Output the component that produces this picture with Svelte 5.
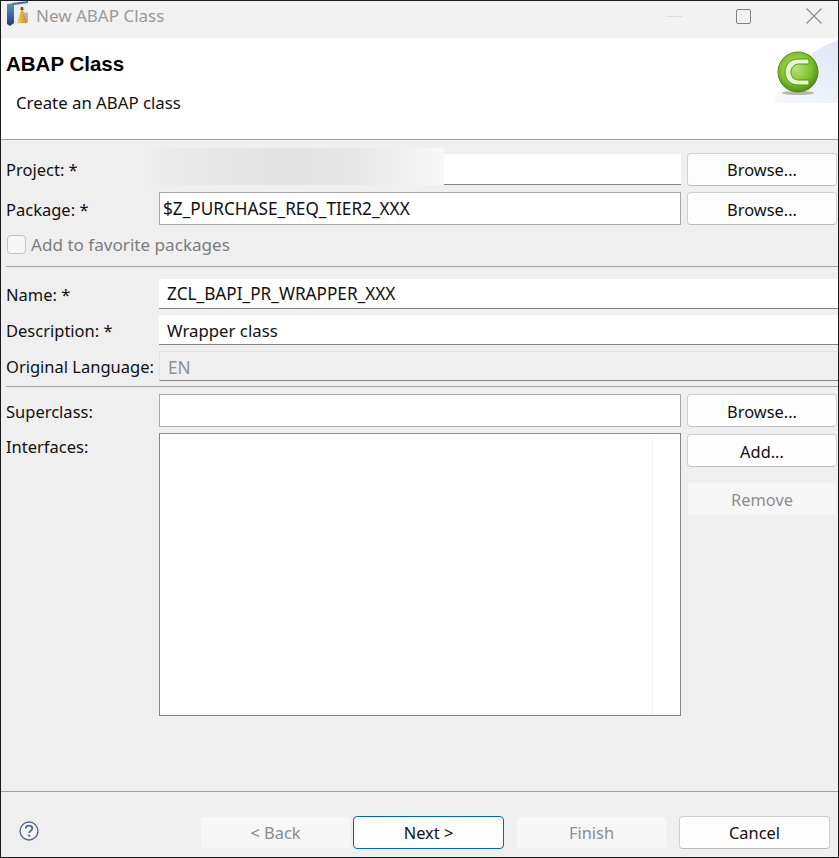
<script>
  const buttonsBottom = ['< Back', 'Next >', 'Finish', 'Cancel'];
</script>

<div class="dialog">
  <div class="titlebar">
    <svg class="app-icon" width="22" height="26" viewBox="0 0 22 26">
      <defs>
        <linearGradient id="cone" x1="0" x2="1" y1="0" y2="0">
          <stop offset="0" stop-color="#f4cf6a" />
          <stop offset="1" stop-color="#c98a16" />
        </linearGradient>
        <linearGradient id="book" x1="0" x2="0" y1="0" y2="1">
          <stop offset="0" stop-color="#5f8fc4" />
          <stop offset="1" stop-color="#1e3f70" />
        </linearGradient>
      </defs>
      <path d="M6 3 L21 1 V21 L6 24z" fill="#ececec" />
      <path d="M0 3 L7 2 V22 L3 25 L0 23z" fill="url(#book)" />
      <path d="M5 2 L21 0 V2 L7 4z" fill="#3f73ad" />
      <path d="M15 11 L21 12 V21 L15 22z" fill="#b4b4b4" />
      <path d="M15 6 L20 22 H10z" fill="url(#cone)" />
      <path d="M14 6h2l.7 3h-3.4z" fill="#6f5a22" />
    </svg>
    <span class="title">New ABAP Class</span>
    <div class="win-controls">
      <span class="minimize"></span>
      <span class="maximize"></span>
      <svg width="16" height="16" viewBox="0 0 16 16"><path d="M.5.5l15 15M15.5.5l-15 15" stroke="#8a8a8a" stroke-width="1.1" fill="none" /></svg>
    </div>
  </div>

  <div class="banner">
    <div>
      <h1>ABAP Class</h1>
      <p>Create an ABAP class</p>
    </div>
    <div class="banner-art">
      <svg width="64" height="66" viewBox="0 0 64 66">
        <defs>
          <radialGradient id="ball" cx="0.45" cy="0.4" r="0.65">
            <stop offset="0" stop-color="#b5e27a" />
            <stop offset="0.6" stop-color="#7fc22c" />
            <stop offset="1" stop-color="#3f8410" />
          </radialGradient>
          <linearGradient id="swoosh" x1="0" x2="1" y1="1" y2="0">
            <stop offset="0" stop-color="#f7f9fd" />
            <stop offset="1" stop-color="#dfe7f6" />
          </linearGradient>
        </defs>
        <path d="M0 65 C8 38 32 14 64 2 V65z" fill="url(#swoosh)" />
        <ellipse cx="24" cy="55" rx="16" ry="2" fill="#b4b8a6" />
        <circle cx="24" cy="34" r="20" fill="url(#ball)" stroke="#5e7f2c" stroke-width="1" />
        <path d="M35 21 H24 C16 21 11 27 11 34 C11 42 17 47 24 47 H35 V42 H25 C20 42 17 39 17 34 C17 30 20 26 25 26 H35z" fill="#e8f6d4" stroke="#4f9a18" stroke-width="1" />
      </svg>
    </div>
  </div>

  <div class="body">
    <div class="blur"></div>

    <div class="row row-project">
      <span class="label">Project: *</span>
      <div class="input underlined"></div>
      <button class="btn">Browse...</button>
    </div>
    <div class="row row-package nudge">
      <span class="label">Package: *</span>
      <div class="input boxed">$Z_PURCHASE_REQ_TIER2_XXX</div>
      <button class="btn">Browse...</button>
    </div>
    <label class="check">
      <span class="checkbox"></span>
      <span>Add to favorite packages</span>
    </label>
    <hr class="sep first" />

    <div class="row wide name">
      <span class="label">Name: *</span>
      <div class="input underlined">ZCL_BAPI_PR_WRAPPER_XXX</div>
    </div>
    <div class="row wide desc nudge">
      <span class="label">Description: *</span>
      <div class="input underlined">Wrapper class</div>
    </div>
    <div class="row wide lang nudge">
      <span class="label">Original Language:</span>
      <div class="input underlined readonly">EN</div>
    </div>
    <hr class="sep second" />

    <div class="row row-super nudge2">
      <span class="label">Superclass:</span>
      <div class="input boxed"></div>
      <button class="btn">Browse...</button>
    </div>
    <div class="row row-interfaces nudge">
      <span class="label top">Interfaces:</span>
      <div class="listbox"><div class="scroll-line"></div></div>
      <div class="side-btns">
        <button class="btn">Add...</button>
        <button class="btn disabled">Remove</button>
      </div>
    </div>
  </div>

  <div class="footer">
    <svg class="help" width="20" height="20" viewBox="0 0 20 20">
      <circle cx="10" cy="10" r="9" fill="#f6f6f8" stroke="#5d6b8a" stroke-width="1.4" />
      <path d="M6.8 7.6c0-2 1.5-3 3.3-3s3.2 1 3.2 2.7c0 2.4-3.2 2.4-3.2 4.6" fill="none" stroke="#5d6b8a" stroke-width="1.9" />
      <circle cx="10.1" cy="14.6" r="1.2" fill="#5d6b8a" />
    </svg>
    <div class="nav-btns">
      {#each buttonsBottom as text}
        <button
          class="btn nav"
          class:disabled={text === '< Back' || text === 'Finish'}
          class:primary={text === 'Next >'}
        >{text}</button>
      {/each}
    </div>
  </div>
</div>

<style>
  :global(body) {
    margin: 0;
    background: #efefef;
  }
  .dialog {
    box-sizing: border-box;
    width: 839px;
    height: 858px;
    display: flex;
    flex-direction: column;
    border: 1px solid #1a1a1a;
    background: #efefef;
    font-family: "Noto Sans", "Open Sans", sans-serif;
    font-size: 17px;
    color: #111;
    overflow: hidden;
  }
  .titlebar {
    height: 37px;
    background: #f2f2f2;
    display: flex;
    align-items: center;
    padding-left: 6px;
    flex-shrink: 0;
  }
  .app-icon {
    margin-right: 7px;
    margin-top: -11px;
  }
  .title {
    color: #9a9a9a;
    font-size: 17px;
    margin-top: -8px;
  }
  .win-controls {
    margin-left: auto;
    display: flex;
    align-items: center;
    margin-top: -7px;
    margin-right: 16px;
  }
  .minimize {
    width: 15px;
    height: 1px;
    background: #dcdcdc;
    margin-right: 54px;
  }
  .maximize {
    box-sizing: border-box;
    width: 15px;
    height: 15px;
    border: 1.5px solid #808080;
    border-radius: 2px;
    margin-right: 55px;
  }
  .banner {
    height: 101px;
    background: #fff;
    border-bottom: 1px solid #a0a0a0;
    display: flex;
    justify-content: space-between;
    flex-shrink: 0;
  }
  .banner h1 {
    margin: 14px 0 0 5px;
    font-family: "Liberation Sans", sans-serif;
    font-size: 20.5px;
    line-height: 24px;
    font-weight: 700;
    color: #000;
  }
  .banner p {
    margin: 15px 0 0 15px;
    font-size: 16.8px;
    line-height: 24px;
  }
  .banner-art {
    align-self: flex-start;
    height: 66px;
  }
  .body {
    position: relative;
    flex: 1;
    padding: 13px 0 0 5px;
    display: flex;
    flex-direction: column;
  }
  .blur {
    position: absolute;
    left: 150px;
    top: 8px;
    width: 293px;
    height: 37px;
    background: linear-gradient(90deg, #ececec 0%, #e3e3e3 45%, #e7e7e7 70%, #f8f8f8 100%);
    z-index: 1;
  }
  .row {
    display: flex;
    align-items: center;
  }
  .label {
    width: 153px;
    flex-shrink: 0;
    white-space: nowrap;
    font-size: 16.5px;
  }
  .input {
    box-sizing: border-box;
    width: 522px;
    height: 31px;
    background: #fff;
    padding-left: 8px;
    font-size: 17.2px;
    line-height: 30px;
    white-space: nowrap;
    flex-shrink: 0;
  }
  .boxed {
    height: 33px;
    border: 1px solid #a8a8a8;
    padding-left: 3px;
  }
  .underlined {
    border-bottom: 1px solid #858585;
  }
  .wide .input {
    flex: 1;
    width: auto;
    height: 30px;
    line-height: 29px;
    margin-right: -2px;
  }
  .desc .input {
    font-size: 16.8px;
  }
  .readonly {
    background: #efefef;
    color: #8f8f8f;
    border-top: 1px solid #e4e4e4;
    border-left: 1px solid #e4e4e4;
  }
  .btn {
    box-sizing: border-box;
    width: 150px;
    height: 33px;
    margin-left: 6px;
    padding: 0;
    background: #fdfdfd;
    border: 1px solid #d0d0d0;
    border-bottom-color: #bdbdbd;
    border-radius: 4px;
    font: inherit;
    font-size: 16.4px;
    color: #111;
    flex-shrink: 0;
  }
  .btn.disabled {
    background: #f7f7f7;
    border-color: #f0f0f0;
    color: #8c8c8c;
  }
  .btn.primary {
    border: 1.5px solid #0067c0;
  }
  .nudge .label,
  .nudge .input,
  .nudge .btn {
    padding-top: 1px;
  }
  .nudge2 .label,
  .nudge2 .btn {
    padding-top: 2px;
  }
  .row-project { height: 32px; }
  .row-package { height: 33px; margin-top: 7px; }
  .check {
    display: flex;
    align-items: center;
    gap: 5px;
    margin-top: 9px;
    height: 20px;
    color: #7d7d7d;
    padding-left: 1px;
    font-size: 17.1px;
  }
  .checkbox {
    box-sizing: border-box;
    width: 19px;
    height: 19px;
    border: 1px solid #c4c4c4;
    border-radius: 4px;
    background: #f6f6f6;
  }
  .sep {
    border: 0;
    height: 1px;
    background: #a0a0a0;
    margin: 0 -1px 0 0;
  }
  .sep.first { margin-top: 12px; }
  .name { margin-top: 12px; }
  .desc { margin-top: 6px; }
  .lang { margin-top: 6px; }
  .sep.second { margin-top: 5px; }
  .row-super { margin-top: 7px; height: 33px; }
  .row-interfaces {
    margin-top: 6px;
    align-items: flex-start;
  }
  .label.top { line-height: 26px; }
  .listbox {
    box-sizing: border-box;
    width: 522px;
    height: 283px;
    background: #fff;
    border: 1px solid #85858f;
    display: flex;
    justify-content: flex-end;
    padding: 3px 27px 0 0;
    flex-shrink: 0;
  }
  .scroll-line {
    width: 1px;
    background: #eef2fa;
  }
  .side-btns {
    display: flex;
    flex-direction: column;
    gap: 15px;
    padding-top: 1px;
  }
  .footer {
    flex-shrink: 0;
    height: 65px;
    border-top: 1px solid #a0a0a0;
    position: relative;
    display: flex;
    align-items: flex-start;
  }
  .help {
    margin: 29px 0 0 18px;
  }
  .nav-btns {
    position: absolute;
    left: 199px;
    top: 24px;
    display: flex;
  }
  .btn.nav {
    width: 151px;
    margin-left: 0;
  }
  .btn.nav:nth-child(2) { margin-left: 2px; }
  .btn.nav:nth-child(3) { margin-left: 12px; }
  .btn.nav:nth-child(4) { margin-left: 12px; }
</style>
